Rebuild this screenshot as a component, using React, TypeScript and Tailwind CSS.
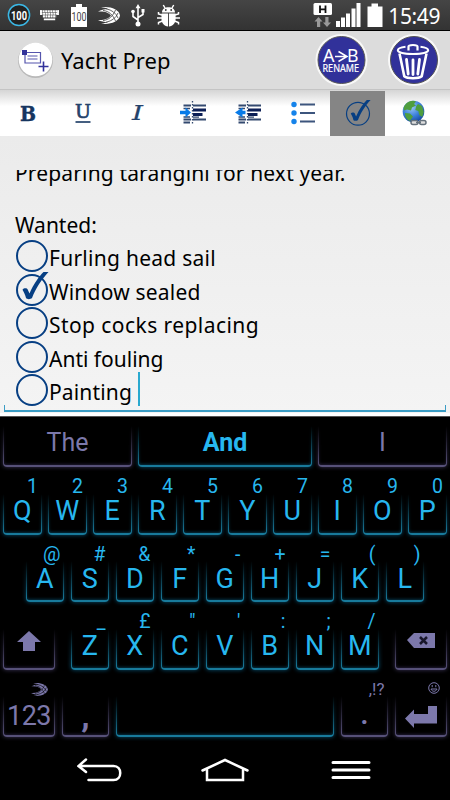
import React from 'react';

type KeyDef = { label?: React.ReactNode; hint?: React.ReactNode; size?: string; muted?: boolean };

const rowOne = ['Q1', 'W2', 'E3', 'R4', 'T5', 'Y6', 'U7', 'I8', 'O9', 'P0'];
const rowTwo = ['A@', 'S#', 'D&', 'F*', 'G-', 'H+', 'J=', 'K(', 'L)'];
const rowThree = ['Z_', 'X£', 'C"', "V'", 'B:', 'N;', 'M/'];

const items = [
  { text: 'Furling head sail', done: false, spacing: 'tracking-[0.27px]' },
  { text: 'Window sealed', done: true, spacing: 'tracking-[0.2px]' },
  { text: 'Stop cocks replacing', done: false, spacing: 'tracking-[0.43px]' },
  { text: 'Anti fouling', done: false, spacing: 'tracking-normal' },
  { text: 'Painting', done: false, spacing: 'tracking-[0.15px]' },
];

function Swoosh({ className, gap }: { className: string; gap: string }) {
  return (
    <svg viewBox="0 0 22 17" className={className}>
      <path d="M3 .3C12-1 21 2 22 8.500 21 15 11 18 3 16.500 7 16.300 9 15.500 10 15 6 15 3 14.500 0 13 6 13.500 11 11.500 13 8.500 11 5.500 6 4 0 4.500 3 3 6 2.200 10 2 8 1 6 .6 3 .3z" fill="currentColor" />
      <path d="M8 1.800C14 3 18 6 20 11M5 3.500C11 4 15 8 17.500 14M8 15.200C14 14 18 11 20 6M5 13.500C11 13 15 9 17.500 3" fill="none" stroke={gap} strokeWidth=".8" />
    </svg>
  );
}

function StatusBar() {
  return (
    <div className="flex h-[31px] items-center border-b border-black bg-gradient-to-b from-[#454545] to-[#333] text-white">
      <svg className="ml-[7px] h-6 w-6" viewBox="0 0 24 24">
        <circle cx="12" cy="12" r="10.600" fill="#222" stroke="#3bb8e6" strokeWidth="1.500" />
        <text x="12" y="16.500" textAnchor="middle" textLength="16" lengthAdjust="spacingAndGlyphs" fontSize="13" fontWeight="700" fill="#fff" fontFamily="Roboto, sans-serif">100</text>
      </svg>
      <svg className="ml-[9px] h-3 w-[19px]" viewBox="0 0 20 12" stroke="#fff" fill="none">
        <path d="M0 2h20M.5 4.700h19M3 7.400h14" strokeWidth="2.200" strokeDasharray="2.200 .5" />
        <path d="M4 10.500h12M1 1v5M19 1v5" strokeWidth="1.800" />
      </svg>
      <svg className="ml-3 h-[23px] w-4" viewBox="0 0 16 23">
        <path d="M5 0h6v3h5v20H0V3h5z" fill="#fff" />
        <text x="8" y="17" textAnchor="middle" textLength="15" lengthAdjust="spacingAndGlyphs" fontSize="12" fill="#444" fontFamily="Roboto, sans-serif">100</text>
      </svg>
      <Swoosh className="ml-[11px] h-[17px] w-[22px]" gap="#3c3c3c" />
      <svg className="ml-[11px] h-[23px] w-[14px]" viewBox="0 0 14 23" stroke="#fff" strokeWidth="1.600" fill="none">
        <path d="M7 3v16M7 16 2 12.500V8M7 13.500l5-3V7" />
        <path d="m7 0 2.500 4.200h-5zM10.500 5h3v3.500h-3z" fill="#fff" stroke="none" />
        <circle cx="2" cy="7.500" r="1.800" fill="#fff" stroke="none" />
        <circle cx="7" cy="20" r="2.500" fill="#fff" stroke="none" />
      </svg>
      <svg className="ml-[12px] h-[23px] w-[23px]" viewBox="0 0 23 23">
        <path d="M5 8.500C5 5 8 3.200 11.500 3.200S18 5 18 8.500zM4.500 9.500h6.600v13C7 22 4.500 19 4.500 15zM12 9.500h6.600V15c0 4-2.600 7-6.600 7.500z" fill="#fff" />
        <path d="M8 4 6.300 1M15 4l1.700-3M5 11 1.500 10V8M18 11l3.500-1V8M5 14H0M18 14h5M5.500 17 1.500 18.500v2M17.500 17l4 1.500v2" stroke="#fff" strokeWidth="1.500" fill="none" />
        <circle cx="8.800" cy="6" r=".9" fill="#333" />
        <circle cx="14.200" cy="6" r=".9" fill="#333" />
      </svg>
      <svg className="ml-auto h-6 w-5" viewBox="0 0 20 24">
        <rect x=".5" width="18.500" height="12" rx="1.500" fill="#fff" />
        <path d="M7 2.500v7.500M12.500 2.500v7.500M7 6.300h5.500" stroke="#111" strokeWidth="1.800" />
        <path d="m5.500 14 4 4.500h-2.300V24H4v-5.500H1.500zM14 24l-4-4.500h2.300V14h3.200v5.500H18z" fill="#999" />
      </svg>
      <svg className="ml-[3px] h-6 w-[25px]" viewBox="0 0 25 24" fill="#fff">
        <path d="M0 18h4v6H0zM5 14.500h4V24H5zM10 10.500h4V24h-4zM15.500 5.500h4V24h-4zM20.500 0h4v24h-4z" />
      </svg>
      <svg className="ml-[6px] h-6 w-4" viewBox="0 0 16 24">
        <path d="M4.500.5h6.500v3h4.500V24H.5V3.500h4z" fill="#fff" />
      </svg>
      <span className="ml-[5px] mr-[10px] pt-[2px] font-['Noto_Sans',sans-serif] text-[21px] leading-[29px] tracking-[-0.4px]">15:49</span>
    </div>
  );
}

function Header() {
  return (
    <div className="flex h-[59px] items-center border-b border-[#c4c4c4] bg-[#dcdcdc] pl-[17px] pr-[9px]">
      <svg className="h-[38px] w-[37px]" viewBox="0 0 37 38">
        <circle cx="18.500" cy="19.500" r="17.500" fill="#b9b9b9" />
        <circle cx="18.500" cy="18.500" r="16.800" fill="#fff" />
        <path d="M8 11.500h15.500v10.500H8zM10.500 15h10M10.500 18h10" fill="none" stroke="#5555ad" strokeWidth="1.200" />
        <path d="M21.500 25.500h10M26.500 20.500v10" fill="none" stroke="#32329b" strokeWidth="1.600" />
        <path d="M5 9h5v5H5z" fill="#32329b" />
      </svg>
      <span className="ml-[7px] text-[22px] leading-7">Yacht Prep</span>
      <svg className="ml-auto h-[54px] w-[53px]" viewBox="0 0 53 54">
        <circle cx="26.500" cy="27" r="26" fill="#f8f8f8" />
        <circle cx="26.500" cy="27" r="23.500" fill="#31319a" stroke="#555" strokeWidth="1" />
        <text x="8" y="28.700" textLength="11.500" lengthAdjust="spacingAndGlyphs" fontSize="18.500" fill="#fff">A</text>
        <path d="M20 23.500h12M23.500 18.500l8.500 5-8.500 5" fill="none" stroke="#fff" strokeWidth="1.500" />
        <text x="32" y="28.700" textLength="11.500" lengthAdjust="spacingAndGlyphs" fontSize="18.500" fill="#fff">B</text>
        <text x="7.500" y="38.500" textLength="36.500" lengthAdjust="spacingAndGlyphs" fontSize="11" fill="#fff" stroke="#fff" strokeWidth=".2">RENAME</text>
      </svg>
      <svg className="ml-5 h-[54px] w-[53px]" viewBox="0 0 53 54" fill="none" stroke="#fff">
        <circle cx="26" cy="27" r="26" fill="#f8f8f8" stroke="none" />
        <circle cx="26" cy="27" r="23.500" fill="#31319a" stroke="#555" />
        <path d="M17.500 13.800C12 14.500 9.800 15.800 9.800 17.300c0 2.200 6 3.700 15.200 3.700s15.200-1.500 15.200-3.700c0-1.500-2.200-2.800-7.700-3.500" strokeWidth="2" />
        <path d="M20.500 17.500v-4c0-2 9-2 9 0v4" strokeWidth="2.200" />
        <path d="m11.500 20.500 4.800 22.800c3 2.500 14.400 2.500 17.400 0l4.800-22.800" strokeWidth="2.600" />
        <path d="m18.500 26.500 1.700 14.500M25 27v14.500M31.500 26.500 29.800 41" strokeWidth="2.800" strokeLinecap="round" />
      </svg>
    </div>
  );
}

function Indent({ flip }: { flip?: boolean }) {
  return (
    <svg className="h-6 w-[26px]" viewBox="0 0 26 24" fill="none" stroke="#33496f">
      <path d="M3.500 4.500H11M13 4.500h13M3.500 18.500H11M13 18.500h13M3.500 21.500H10" strokeWidth="2" />
      <path d="M13 9h13M13 13.500h9.500" stroke="#0c1f56" strokeWidth="3" />
      <path d="M13 16.200h6M3.500 7.500H10M3.500 16H10" strokeWidth="1.300" />
      <path d="M12.500 0v24" strokeWidth="1.300" strokeDasharray="1.500 1.500" />
      <path d={flip ? 'm0 11.500 7.500-5v3.300h3v3.400h-3v3.300z' : 'm11 11.500-5.500-5v3.300H0v3.400h5.500v3.300z'} fill="#087be8" stroke="none" />
    </svg>
  );
}

function Tick({ className, box }: { className: string; box?: boolean }) {
  return (
    <svg className={className} viewBox="0 0 34 34" fill="none">
      <circle cx="17" cy="18" r="15" stroke="#073f83" strokeWidth={box ? 2 : 1.600} />
      <path d="M7.500 17.800c1.500-2 4.500-1.800 5.300 0l1.700 3.700C18.500 12 24 4.500 28.500 0H33.500C27 7 20.500 16.500 17 26c-1.500 1.500-5 1.500-6 0-.7-3-2-5.500-3.500-8.200z" fill="#073f83" />
    </svg>
  );
}

function Toolbar() {
  const cell = 'flex h-[45px] w-[55px] items-center justify-center pb-px';
  return (
    <div className="flex h-[46px] bg-gradient-to-b from-[#d5d5d5] via-white via-35% to-white pt-px">
      <div className={cell}>
        <svg className="h-6 w-4 overflow-visible" viewBox="0 0 16 24" fill="#16355f" fontFamily="DejaVu Serif, serif">
          <text x="0" y="19.500" textLength="16" lengthAdjust="spacingAndGlyphs" fontSize="20" fontWeight="700" stroke="#16355f" strokeWidth=".4">B</text>
        </svg>
      </div>
      <div className={cell}>
        <svg className="h-6 w-4 overflow-visible" viewBox="0 0 16 24" fill="#24436b" fontFamily="DejaVu Serif, serif">
          <text x="0" y="17" textLength="16" lengthAdjust="spacingAndGlyphs" fontSize="18" stroke="#24436b" strokeWidth=".7">U</text>
          <path d="M.5 21h15" stroke="#24436b" strokeWidth="1.700" />
        </svg>
      </div>
      <div className={cell}>
        <svg className="h-6 w-4 overflow-visible" viewBox="0 0 16 24" fill="#24436b" fontFamily="DejaVu Serif, serif">
          <text x="2" y="18.500" textLength="11" lengthAdjust="spacingAndGlyphs" fontSize="19.500" fontStyle="italic" stroke="#24436b" strokeWidth=".2">I</text>
        </svg>
      </div>
      <div className={cell}><Indent /></div>
      <div className={cell}><Indent flip /></div>
      <div className={cell}>
        <svg className="h-6 w-6" viewBox="0 0 24 24">
          <g fill="#1583ea"><circle cx="3" cy="3.500" r="2.700" /><circle cx="3" cy="12" r="2.700" /><circle cx="3" cy="20.500" r="2.700" /></g>
          <path d="M9 3.500h15M9 12h15M9 20.500h15" stroke="#3c557d" strokeWidth="2.200" />
        </svg>
      </div>
      <div className={`${cell} bg-[#858585]`}><Tick className="h-[26px] w-[26px]" /></div>
      <div className={cell}>
        <svg className="ml-1 h-[26px] w-[25px]" viewBox="0 0 25 26">
          <defs>
            <radialGradient id="sea" cx=".4" cy=".3" r=".7"><stop stopColor="#9ccbf6" /><stop offset=".6" stopColor="#3b7fda" /><stop offset="1" stopColor="#174da5" /></radialGradient>
          </defs>
          <circle cx="11.500" cy="11.500" r="10.800" fill="url(#sea)" />
          <path d="M3 5C6 1 11 0 14 1.500L12 4l2 1.500-4 2-1 3-4-1-3 1C1 8 2 6 3 5zM3 13l5 .5 3 3-3 4.500C5 20 3 17 3 13zM16 4l4 2 1.800 6-1.500 5-3-2-1-4-3-1 1-4z" fill="#4f9e3e" />
          <g fill="#ddd" stroke="#65717c" strokeWidth="1.500"><rect x="9" y="20.500" width="7" height="4" rx="2" /><rect x="17.500" y="20.500" width="6.500" height="4" rx="2" /><path d="M14 22.500h5" /></g>
        </svg>
      </div>
    </div>
  );
}

function Note() {
  return (
    <div className="flex h-[280px] flex-col border-b-[3px] border-white bg-gradient-to-b from-[#ebebeb] to-[#f4f4f4] px-1 pt-[34px] text-[21px] text-black">
      <div className="flex h-[242px] flex-col border-b-2 border-[#3a9cc4] pl-[11px]">
        <div className="h-[39px] overflow-hidden">
          <p className="-mt-[13px] leading-[32px] tracking-[0.15px]">Preparing tarangini for next year.</p>
        </div>
        <p className="h-[29px] leading-[32px]">Wanted:</p>
        {items.map(item => (
          <div key={item.text} className="flex h-[33.5px] items-start">
            {item.done ? (
              <Tick box className="h-[34px] w-[34px] shrink-0" />
            ) : (
              <svg className="h-[34px] w-[34px] shrink-0" viewBox="0 0 34 34"><circle cx="17" cy="18" r="15" fill="none" stroke="#073f83" strokeWidth="2" /></svg>
            )}
            <span className={`pt-px leading-[38px] ${item.spacing}`}>{item.text}</span>
            {item.text === 'Painting' && <span className="ml-[6px] h-[34px] w-[2px] bg-[#2aa9cf]" />}
          </div>
        ))}
      </div>
      <div className="-mt-[7px] flex h-[7px] justify-between">
        <span className="w-px bg-[#3a9cc4]" />
        <span className="w-px bg-[#3a9cc4]" />
      </div>
    </div>
  );
}

// u-shaped neon outline, the sides fade out towards the top
function Frame({ muted }: { muted?: boolean }) {
  return (
    <div className="pointer-events-none absolute -inset-x-1 -bottom-1 h-[45px] overflow-hidden px-1 pb-1 [mask-image:linear-gradient(transparent,black_85%)]">
      <div className={muted
        ? 'h-full rounded-b-[4px] border border-t-0 border-b-2 border-[#565078] shadow-[0_0_4px_#3c3558,inset_0_-1px_3px_#201b33]'
        : 'h-full rounded-b-[4px] border border-t-0 border-b-2 border-[#187a9b] shadow-[0_0_4px_#085272,inset_0_-1px_3px_#053245]'} />
    </div>
  );
}

function Key({ label, hint, size = 'w-[38.5px] mr-[0.5px]', muted }: KeyDef) {
  return (
    <div className={`relative flex h-[67.5px] shrink-0 flex-col ${size} ${muted ? 'text-[#7c78ab]' : 'text-[#27b7ef]'}`}>
      <Frame muted={muted} />
      <span className="flex h-[32px] items-end justify-end pr-[3.500px] text-[19.5px] leading-[24px]">{hint}</span>
      <span className="flex h-[25px] items-center justify-center text-[27px] leading-[25px]">{label}</span>
    </div>
  );
}

function Suggestion({ text, className, muted }: { text: string; className: string; muted?: boolean }) {
  return (
    <div className={`relative flex h-[50px] items-center justify-center pt-[2px] text-[25px] ${className}`}>
      <Frame muted={muted} />
      <span>{text}</span>
    </div>
  );
}

function Keyboard() {
  return (
    <div className="border-t border-[#555] bg-black font-[Roboto,sans-serif]">
      <div className="flex gap-[6px] px-[3px]">
        <Suggestion text="The" muted className="w-[129px] text-[#7c78ab]" />
        <Suggestion text="And" className="w-[174px] font-bold text-[#27b7ef]" />
        <Suggestion text="I" muted className="w-[129px] text-[#7c78ab]" />
      </div>
      <div className="flex gap-[6px] pl-[3px]">
        {rowOne.map(k => <Key key={k} label={k[0]} hint={k[1]} />)}
      </div>
      <div className="flex gap-[6px] pl-[25.5px]">
        {rowTwo.map(k => <Key key={k} label={k[0]} hint={k[1]} />)}
      </div>
      <div className="flex gap-[6px] pl-[3px]">
        <Key muted size="w-[52px] mr-[9.500px]" label={
          <svg className="-mt-3 h-5 w-6" viewBox="0 0 24 20" fill="currentColor"><path d="m12 0 12 11h-6v9H6v-9H0z" /></svg>
        } />
        {rowThree.map(k => <Key key={k} label={k[0]} hint={k[1]} />)}
        <Key muted size="w-[52px] ml-[9.500px]" label={
          <svg className="-mt-[13px] h-[15px] w-7" viewBox="0 0 28 15"><path d="M0 7 7 0h21v15H7z" fill="currentColor" /><path d="m13 4 7 7m0-7-7 7" stroke="#18162a" strokeWidth="2.500" /></svg>
        } />
      </div>
      <div className="flex gap-[7px] pl-[3px]">
        <Key muted size="w-[52px]" label={<span className="pt-[5px] tracking-[-0.5px]">123</span>} hint={<Swoosh className="mb-[6px] mr-1 h-[13px] w-[17px]" gap="#000" />} />
        <Key muted size="w-[47px]" label={<b className="pt-[2px] text-[34px]">,</b>} />
        <Key size="w-[218px]" />
        <Key muted size="w-[47px]" label={<b className="pt-[3px]">.</b>} hint={<span className="pb-px text-[17px] leading-[24px]">,!?</span>} />
        <Key muted size="w-[52px]" label={
          <svg className="mt-[6px] h-[22px] w-8 shrink-0" viewBox="0 0 32 22" fill="currentColor"><path d="m0 12.500 9-9V8h14V0h9v17.500H9V22z" /></svg>
        } hint={
          <svg className="mb-[8px] mr-1 h-3 w-3" viewBox="0 0 12 12" fill="none" stroke="currentColor"><circle cx="6" cy="6" r="5.300" /><path d="M3 7c1 3 5 3 6 0zM4.200 3v2.200M7.800 3v2.200" /></svg>
        } />
      </div>
    </div>
  );
}

function NavBar() {
  return (
    <div className="flex h-[62px] items-center bg-black pl-[77px] pt-1 text-white">
      <svg className="h-6 w-[45px]" viewBox="0 0 45 24" fill="none" stroke="#fff" strokeWidth="2.500" strokeLinecap="round">
        <path d="M9 1.500 1.500 8 9 14M2 8h34.500c9 0 9 14 0 14H11.500" />
      </svg>
      <svg className="ml-[79px] h-6 w-12" viewBox="0 0 48 24" fill="none" stroke="#fff" strokeWidth="2.500" strokeLinecap="round">
        <path d="M1.500 12.500 24 2l22.500 10.500M6 11.500V22h36V11.500" />
      </svg>
      <svg className="ml-[82px] h-6 w-10" viewBox="0 0 40 24" stroke="#fff" strokeWidth="3" strokeLinecap="round">
        <path d="M2 4.500h36M2 12h36M2 19.500h36" />
      </svg>
    </div>
  );
}

export default function App() {
  return (
    <div className="h-[800px] w-[450px] overflow-hidden bg-black font-['Noto_Sans',sans-serif]">
      <StatusBar />
      <Header />
      <Toolbar />
      <Note />
      <Keyboard />
      <NavBar />
    </div>
  );
}
